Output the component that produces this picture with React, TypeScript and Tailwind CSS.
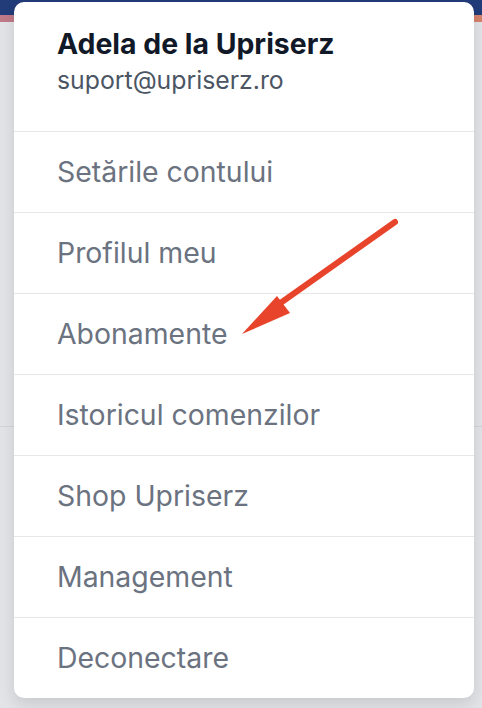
const items = [
  "Setările contului",
  "Profilul meu",
  "Abonamente",
  "Istoricul comenzilor",
  "Shop Upriserz",
  "Management",
  "Deconectare",
];

function Arrow() {
  return (
    <svg
      className="pointer-events-none absolute left-0 top-0"
      width="482"
      height="708"
      viewBox="0 0 482 708"
    >
      <line
        x1="395"
        y1="222"
        x2="272"
        y2="309"
        stroke="#e8432b"
        strokeWidth="6"
        strokeLinecap="round"
      />
      <polygon points="242,334 277,296 290,313" fill="#e8432b" />
    </svg>
  );
}

export default function App() {
  return (
    <div
      className="relative h-[708px] w-[482px] overflow-hidden bg-[#e3e4e8]"
      style={{ fontFamily: "Inter, 'Noto Sans', sans-serif" }}
    >
      {/* page behind the menu */}
      <div className="h-[15px] bg-[#223c7a]" />
      <div className="h-[7px] bg-gradient-to-r from-[#c07a89] to-[#d6836a]" />
      <div className="h-[405px] border-b border-[#d2d4d9]" />

      {/* dropdown */}
      <div className="absolute left-[14px] top-[2px] w-[460px] overflow-hidden rounded-[10px] bg-white shadow-[0_6px_16px_rgba(0,0,0,0.12)]">
        <div className="px-[43px] pt-[24px] pb-[33px]">
          <p className="text-[28.4px] font-bold leading-[36px] text-[#111827]">
            Adela de la Upriserz
          </p>
          <p className="text-[24.8px] leading-[36px] text-[#4b5563]">
            suport@upriserz.ro
          </p>
        </div>
        {items.map((item) => (
          <div
            key={item}
            className="border-t border-[#e5e7eb] px-[43px] text-[28.4px] leading-[80px] text-[#6b7280]"
          >
            {item}
          </div>
        ))}
      </div>

      <Arrow />
    </div>
  );
}
